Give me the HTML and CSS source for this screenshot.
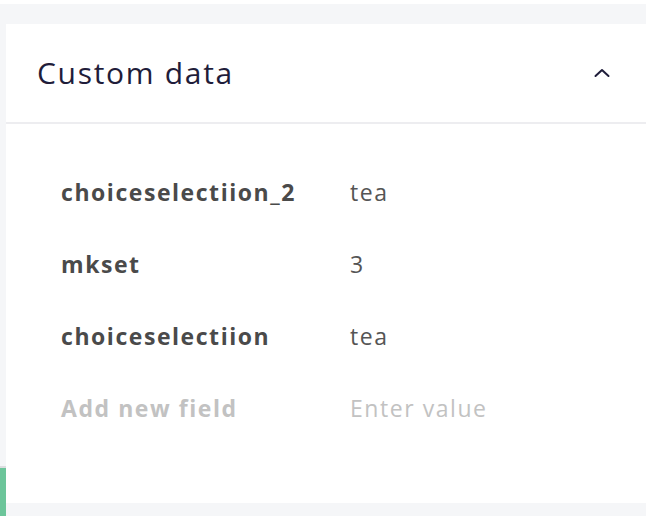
FILE: index.html
```html
<!DOCTYPE html>
<html>
<head>
<meta charset="utf-8">
<link rel="stylesheet" href="styles.css">
</head>
<body>
<div class="topband"></div>
<div class="main">
  <div class="rail">
    <div class="rail-active"></div>
  </div>
  <div class="content">
    <section class="card">
      <header class="card-head">
        <h2 class="card-title">Custom data</h2>
        <svg class="chevron" width="16" height="10" viewBox="0 0 16 10"><path d="M1.5 8 L8 2 L14.5 8" fill="none" stroke="#1f1d3a" stroke-width="2" stroke-linecap="round" stroke-linejoin="round"/></svg>
      </header>
      <div class="card-body">
        <div class="row"><span class="key">choiceselectiion_2</span><span class="val">tea</span></div>
        <div class="row"><span class="key">mkset</span><span class="val">3</span></div>
        <div class="row"><span class="key">choiceselectiion</span><span class="val">tea</span></div>
        <div class="row placeholder"><span class="key">Add new field</span><span class="val">Enter value</span></div>
      </div>
    </section>
  </div>
</div>
</body>
</html>
```
FILE: styles.css
```css
html, body {
  margin: 0;
  padding: 0;
  background: #ffffff;
  font-family: "Open Sans", "Lato", sans-serif;
}
.topband {
  height: 4px;
  background: #ffffff;
}
.main {
  display: flex;
  height: 512px;
  background: #f5f6f8;
}
.rail {
  width: 6px;
  display: flex;
  flex-direction: column;
  justify-content: flex-end;
}
.rail-active {
  height: 48px;
  background: #6cc59a;
  border-top: 2px solid #dcdde0;
}
.content {
  flex: 1;
  padding-top: 20px;
  padding-bottom: 13px;
  display: flex;
  flex-direction: column;
}
.card {
  flex: 1;
  background: #ffffff;
  display: flex;
  flex-direction: column;
}
.card-head {
  height: 100px;
  box-sizing: border-box;
  border-bottom: 2px solid #ededf0;
  display: flex;
  align-items: center;
  justify-content: space-between;
  padding: 0 36px 1px 31px;
}
.card-title {
  margin: 0;
  font-weight: 400;
  font-size: 30px;
  letter-spacing: 1.7px;
  color: #1f1d3a;
}
.chevron {
  display: block;
}
.card-body {
  padding: 32px 0 0 55px;
}
.row {
  display: flex;
  align-items: center;
  height: 72px;
  font-size: 23px;
  letter-spacing: 1.55px;
}
.key {
  width: 289px;
  font-weight: 700;
  color: #4a4a4a;
}
.val {
  color: #555555;
}
.placeholder .key,
.placeholder .val {
  color: #c2c2c2;
}
```
